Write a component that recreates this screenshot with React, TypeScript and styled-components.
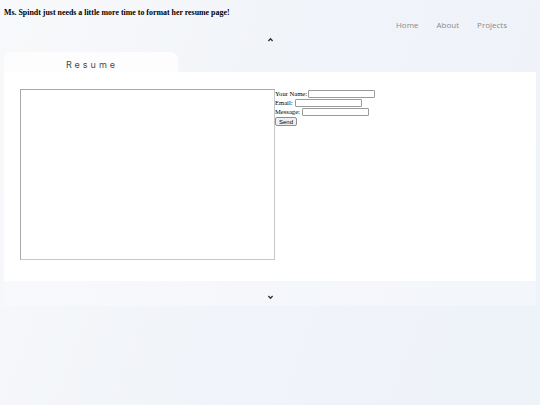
import * as React from 'react'
import styled, { createGlobalStyle } from 'styled-components'

const GlobalStyle = createGlobalStyle`
  html, body {
    margin: 0;
    padding: 0;
    min-height: 100%;
  }
  body {
    background: linear-gradient(110deg, #f8f9fb 0%, #f1f4f9 45%, #eef2f9 100%);
    min-height: 405px;
    font-family: "Liberation Serif", serif;
  }
`

const Page = styled.div`
  display: flex;
  flex-direction: column;
  min-height: 405px;
`

const Notice = styled.h4`
  margin: 0;
  padding: 8px 4px 0;
  font-family: "Liberation Serif", serif;
  font-weight: bold;
  font-size: 7.9px;
  color: #000;
`

const Nav = styled.nav`
  display: flex;
  justify-content: flex-end;
  gap: 18px;
  padding: 2px 33px 0 0;
`

const NavLink = styled.a`
  font-family: "Open Sans", sans-serif;
  font-size: 8px;
  color: #8a8a8a;
  text-decoration: none;
`

const Chevron = styled.div`
  display: flex;
  justify-content: center;
  height: 12px;
  padding-top: 6px;
  margin-bottom: 4px;
  color: #333;
  svg {
    width: 7px;
    height: 7px;
  }
`

const Section = styled.section`
  margin: 0 4px 0 4px;
  display: flex;
  flex-direction: column;
`

const Tab = styled.div`
  width: 174px;
  height: 20px;
  display: flex;
  align-items: center;
  justify-content: center;
  background: #fdfdfe;
  border-radius: 7px 7px 0 0;
  font-family: "Inter", sans-serif;
  font-size: 9px;
  letter-spacing: 3px;
  color: #4a4a4a;
  padding: 5px 0 0 2px;
  box-sizing: border-box;
`

const Panel = styled.div`
  background: #fff;
  height: 209px;
  display: flex;
  align-items: flex-start;
  padding: 17px 0 0 16px;
  box-sizing: border-box;
`

const Area = styled.textarea`
  width: 255px;
  height: 171px;
  box-sizing: border-box;
  border: 1px solid #c8c8c8;
  border-top-color: #a8a8a8;
  border-left-color: #a8a8a8;
  resize: none;
  margin: 0;
  background: #fff;
`

const Form = styled.form`
  display: flex;
  flex-direction: column;
  align-items: flex-start;
  font-family: "Liberation Serif", serif;
  font-size: 6.6px;
  color: #000;
  line-height: 9px;
`

const Row = styled.label`
  display: flex;
  align-items: center;
  gap: 1px;
`

const Field = styled.input<{ indent?: number }>`
  width: 67px;
  height: 8px;
  box-sizing: border-box;
  border: 1px solid #9a9a9a;
  border-radius: 1px;
  padding: 0;
  margin: 0 0 0 ${(p) => p.indent ?? 0}px;
`

const Send = styled.button`
  font-family: "Liberation Sans", sans-serif;
  font-size: 6px;
  padding: 0 3px;
  height: 9px;
  margin-top: 1px;
  border: 1px solid #8f8f8f;
  border-radius: 2px;
  background: #efefef;
  line-height: 6px;
`

const Footer = styled.div`
  margin: 0 4px 0 4px;
  height: 25px;
  background: linear-gradient(90deg, #f7f9fb, #f5f7fb 50%, #f3f6fb);
  display: flex;
  justify-content: center;
  align-items: center;
  padding-top: 7px;
  box-sizing: border-box;
  color: #333;
  svg {
    width: 7px;
    height: 7px;
  }
`

const Up = () => (
  <svg viewBox="0 0 10 10" fill="none" stroke="currentColor" strokeWidth="2">
    <path d="M2 7 L5 4 L8 7" />
  </svg>
)

const Down = () => (
  <svg viewBox="0 0 10 10" fill="none" stroke="currentColor" strokeWidth="2">
    <path d="M2 3 L5 6 L8 3" />
  </svg>
)

export default function App() {
  return (
    <Page>
      <GlobalStyle />
      <Notice>Ms. Spindt just needs a little more time to format her resume page!</Notice>
      <Nav>
        <NavLink href="#">Home</NavLink>
        <NavLink href="#">About</NavLink>
        <NavLink href="#">Projects</NavLink>
      </Nav>
      <Chevron>
        <Up />
      </Chevron>
      <Section>
        <Tab>Resume</Tab>
        <Panel>
          <Area />
          <Form onSubmit={(e) => e.preventDefault()}>
            <Row>
              Your Name:<Field />
            </Row>
            <Row>
              Email: <Field indent={1} />
            </Row>
            <Row>
              Message: <Field indent={1} />
            </Row>
            <Send type="submit">Send</Send>
          </Form>
        </Panel>
      </Section>
      <Footer>
        <Down />
      </Footer>
    </Page>
  )
}
